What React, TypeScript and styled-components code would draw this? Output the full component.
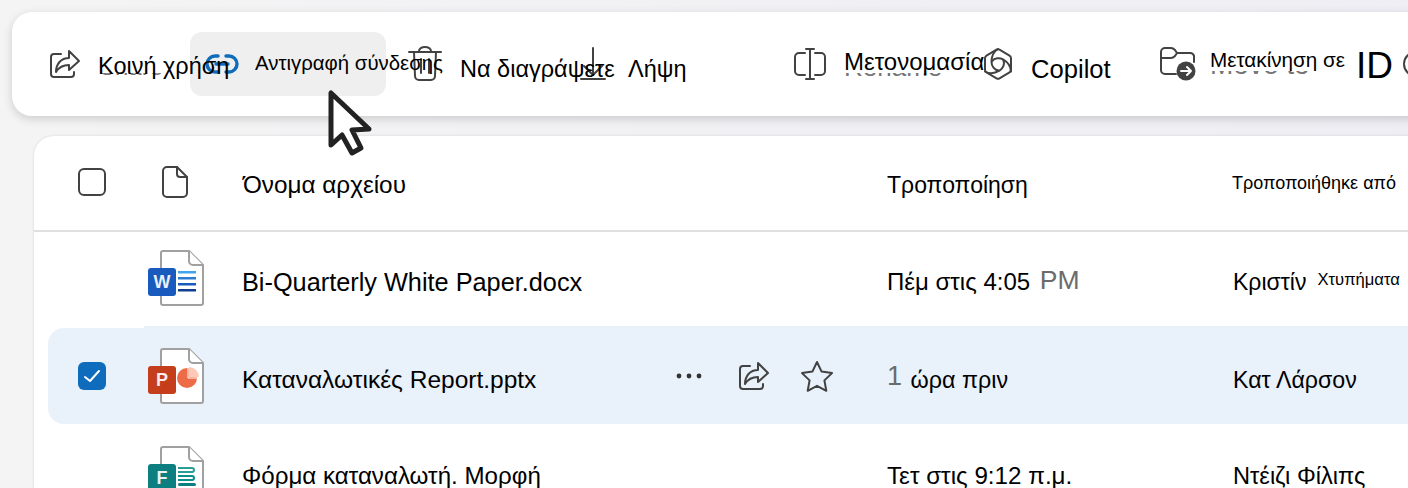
import React from "react";
import styled, { createGlobalStyle } from "styled-components";

const GlobalStyle = createGlobalStyle`
  html, body {
    margin: 0;
    height: 100%;
    overflow: hidden;
    background: linear-gradient(90deg, #f4f4f4, #eeeef4);
  }
  body {
    font-family: "Liberation Sans", Arial, sans-serif;
    color: #000;
  }
`;

const Page = styled.div`
  position: relative;
  width: 1408px;
  height: 488px;
  overflow: hidden;
  padding: 12px 0 0 12px;
  box-sizing: border-box;
`;

const Toolbar = styled.div`
  display: flex;
  align-items: center;
  width: 1500px;
  height: 104px;
  box-sizing: border-box;
  padding-left: 37px;
  background: #fff;
  border-radius: 20px;
  box-shadow: 0 3px 10px rgba(0, 0, 0, 0.16);
`;

const Action = styled.div<{ $width: number; $lead?: number }>`
  position: relative;
  display: flex;
  flex: none;
  align-items: center;
  width: ${(p) => p.$width}px;
  height: 64px;
  margin-left: ${(p) => p.$lead ?? 0}px;
  white-space: nowrap;

  svg {
    flex: none;
  }
`;

const HoverAction = styled(Action)`
  background: #efefef;
  border-radius: 12px;
  padding-left: 15px;
  box-sizing: border-box;
`;

const ActionLabel = styled.span<{ $size: number; $gap: number; $lift: number }>`
  position: relative;
  z-index: 1;
  font-size: ${(p) => p.$size}px;
  line-height: 30px;
  margin-left: ${(p) => p.$gap}px;
  margin-bottom: ${(p) => p.$lift}px;
`;

const AccountRing = styled.div`
  flex: none;
  width: 22px;
  height: 22px;
  margin-left: 10px;
  border: 2px solid #424242;
  border-radius: 50%;
`;

// remains of the untranslated caption, only its lower edge still shows
const Ghost = styled.span<{ $left: number; $top: number; $size: number }>`
  position: absolute;
  left: ${(p) => p.$left}px;
  top: ${(p) => p.$top}px;
  height: 3px;
  overflow: hidden;
  font-size: ${(p) => p.$size}px;
  color: #757575;

  span {
    display: block;
    margin-top: -18px;
    line-height: 24px;
  }
`;

const Panel = styled.div`
  width: 1500px;
  height: 420px;
  margin: 20px 0 0 22px;
  background: #fff;
  border-radius: 20px 0 0 0;
  box-shadow: 0 0 3px rgba(0, 0, 0, 0.12);
`;

const HeaderRow = styled.div`
  display: grid;
  grid-template-columns: 128px 81px 644px 345px 1fr;
  align-items: center;
  height: 96px;
  border-bottom: 2px solid #e0e0e0;
  box-sizing: border-box;
`;

const HeaderCell = styled.div<{ $size: number; $drop: number }>`
  font-size: ${(p) => p.$size}px;
  line-height: 30px;
  white-space: nowrap;
  margin-top: ${(p) => p.$drop}px;
`;

const CheckCell = styled.div`
  display: flex;
  align-items: center;
  justify-content: center;
  padding-right: 12px;
`;

const HeadCheckCell = styled(CheckCell)`
  margin-bottom: 2px;
`;

const CheckBox = styled.div<{ $checked?: boolean }>`
  display: flex;
  align-items: center;
  justify-content: center;
  width: 28px;
  height: 28px;
  box-sizing: border-box;
  border-radius: 6px;
  border: ${(p) => (p.$checked ? "none" : "2px solid #424242")};
  background: ${(p) => (p.$checked ? "#0f6cbd" : "#fff")};
`;

const DocCell = styled.div`
  display: flex;
  align-items: center;
`;

const HeadDocCell = styled(DocCell)`
  margin-bottom: 2px;
`;

const NameCell = styled.div<{ $size: number }>`
  position: relative;
  font-size: ${(p) => p.$size}px;
  line-height: 30px;
  white-space: nowrap;
  display: flex;
  align-items: center;
`;

const TextCell = styled.div<{ $size: number }>`
  font-size: ${(p) => p.$size}px;
  line-height: 30px;
  white-space: nowrap;
`;

const FileRow = styled.div<{ $selected?: boolean; $textDrop: number; $iconShift: number }>`
  position: relative;
  display: grid;
  grid-template-columns: 100px 94px 645px 346px 1fr;
  align-items: center;
  height: 96px;
  margin-left: 14px;
  border-radius: 16px 0 0 16px;
  background: ${(p) => (p.$selected ? "#e9f1fb" : "transparent")};

  ${NameCell}, ${TextCell} {
    margin-top: ${(p) => p.$textDrop}px;
  }

  ${DocCell} {
    margin-top: ${(p) => Math.max(p.$iconShift, 0)}px;
    margin-bottom: ${(p) => Math.max(-p.$iconShift, 0)}px;
  }

  ${(p) =>
    p.$selected &&
    `&::before {
      content: "";
      position: absolute;
      left: 96px;
      right: 0;
      top: -2px;
      height: 2px;
      background: #e9f1fb;
    }`}
`;

const RowActions = styled.div`
  position: absolute;
  left: 434px;
  top: -5px;
  display: flex;
  align-items: center;
  gap: 30px;

  svg:first-child {
    margin-right: 6px;
  }
`;

const Muted = styled.span<{ $size: number; $before: number; $after: number; $raise: number }>`
  color: #6b6b6b;
  font-size: ${(p) => p.$size}px;
  line-height: 0;
  vertical-align: ${(p) => p.$raise}px;
  margin: 0 ${(p) => p.$after}px 0 ${(p) => p.$before}px;
`;

const Small = styled.span`
  font-size: 16.6px;
  line-height: 0;
  margin-left: 11px;
  vertical-align: 5px;
`;

const CursorMark = styled.svg`
  position: absolute;
  left: 324px;
  top: 86px;
`;

const stroke = { fill: "none", stroke: "#424242", strokeWidth: 2, strokeLinecap: "round" as const, strokeLinejoin: "round" as const };

const ShareIcon = () => (
  <svg width="32" height="30" viewBox="0 0 32 30" {...stroke}>
    <path d="M12 5H5a3 3 0 0 0-3 3v17a3 3 0 0 0 3 3h17a3 3 0 0 0 3-3v-2" />
    <path d="M20 2l10 10-10 9v-5c-6 0-10 2-13 7 0-8 5-14 13-14z" />
  </svg>
);

const LinkIcon = () => (
  <svg width="34" height="20" viewBox="0 0 34 20" fill="none" stroke="#0f6cbd" strokeWidth="3.4" strokeLinecap="round">
    <path d="M13 2h-3a8 8 0 0 0 0 16h3" />
    <path d="M21 2h3a8 8 0 0 1 0 16h-3" />
    <path d="M11 10h12" />
  </svg>
);

const TrashIcon = () => (
  <svg width="34" height="36" viewBox="0 0 34 36" {...stroke}>
    <path d="M1 6h32" />
    <path d="M11 6V5a6 4 0 0 1 12 0v1" />
    <path d="M6 6l1 24a4 4 0 0 0 4 4h12a4 4 0 0 0 4-4l1-24" />
    <path d="M13 13v14M21 13v14" />
  </svg>
);

const DownloadIcon = () => (
  <svg width="26" height="34" viewBox="0 0 26 34" {...stroke}>
    <path d="M13 1v27" />
    <path d="M4 19l9 9 9-9" />
    <path d="M1 32h24" />
  </svg>
);

const RenameIcon = () => (
  <svg width="32" height="32" viewBox="0 0 32 32" {...stroke}>
    <path d="M11 5H5a4 4 0 0 0-4 4v14a4 4 0 0 0 4 4h6" />
    <path d="M21 5h6a4 4 0 0 1 4 4v14a4 4 0 0 1-4 4h-6" />
    <path d="M12 1h8M16 1v30M12 31h8" />
  </svg>
);

const CopilotIcon = () => (
  <svg width="28" height="32" viewBox="0 0 28 32" {...stroke}>
    <path d="M12.500 1.600a3 3 0 0 1 3 0l10 6a3 3 0 0 1 1.500 2.600v11.600a3 3 0 0 1-1.500 2.600l-10 6a3 3 0 0 1-3 0l-10-6a3 3 0 0 1-1.500-2.600V10.200a3 3 0 0 1 1.500-2.600z" />
    {[0, 120, 240].map((angle) => (
      <path key={angle} d="M14 1C9 4 7.500 9 7.500 14c0 4 3 8 7 8.500" transform={`rotate(${angle} 14 16)`} />
    ))}
  </svg>
);

const MoveIcon = () => (
  <svg width="36" height="34" viewBox="0 0 36 34" fill="none">
    <g {...stroke}>
      <path d="M16 27H5a4 4 0 0 1-4-4V5a4 4 0 0 1 4-4h6c2 0 3 1 4 2l2 3h13a4 4 0 0 1 4 3v6" />
      <path d="M1 11h10c2 0 3-1 4-2l2-3" />
    </g>
    <circle cx="26" cy="24" r="9.500" fill="#424242" />
    <path d="M21 24h10M27 20l4 4-4 4" stroke="#fff" strokeWidth="2" strokeLinecap="round" strokeLinejoin="round" />
  </svg>
);

const DotsIcon = () => (
  <svg width="26" height="6" viewBox="0 0 26 6" fill="#333">
    <circle cx="3" cy="3" r="2.400" />
    <circle cx="13" cy="3" r="2.400" />
    <circle cx="23" cy="3" r="2.400" />
  </svg>
);

const StarIcon = () => (
  <svg width="34" height="32" viewBox="0 0 34 32" {...stroke}>
    <path d="M17 2l4.600 9.600 10.400 1.500-7.600 7.300 1.900 10.400-9.300-5-9.300 5 1.900-10.400L2 13.100l10.400-1.500z" />
  </svg>
);

const FileHeadIcon = () => (
  <svg width="26" height="32" viewBox="0 0 26 32" {...stroke}>
    <path d="M15 1H5a4 4 0 0 0-4 4v22a4 4 0 0 0 4 4h16a4 4 0 0 0 4-4V11z" />
    <path d="M15 1v7a3 3 0 0 0 3 3h7" />
  </svg>
);

const DocIcon: React.FC<{ badge: string; letter: string; children: React.ReactNode }> = ({ badge, letter, children }) => (
  <svg width="58" height="58" viewBox="0 0 58 58">
    <path d="M15 2a2 2 0 0 0-2 2v50a2 2 0 0 0 2 2h38a2 2 0 0 0 2-2V16L41 2z" fill="#fff" stroke="#a0a0a0" strokeWidth="2" />
    <path d="M41 2v10a4 4 0 0 0 4 4h10" fill="#fff" stroke="#a0a0a0" strokeWidth="2" />
    {children}
    <rect x="0" y="19" width="28" height="28" rx="3" fill={badge} />
    <text x="14" y="39" textAnchor="middle" fontSize="18" fontWeight="700" fill="#fff" fillOpacity="0.92" fontFamily="Liberation Sans, Arial, sans-serif">
      {letter}
    </text>
  </svg>
);

const WordDoc = () => (
  <DocIcon badge="#185abd" letter="W">
    <rect x="30" y="22" width="18" height="2.500" fill="#41a5ee" />
    <rect x="30" y="28" width="18" height="2.500" fill="#2b7cd3" />
    <rect x="30" y="34" width="18" height="2.500" fill="#185abd" />
    <rect x="30" y="40" width="18" height="2.500" fill="#103f91" />
  </DocIcon>
);

const SlidesDoc = () => (
  <DocIcon badge="#c43e1c" letter="P">
    <circle cx="39" cy="31" r="10" fill="#ed6c47" />
    <path d="M41 20a10 10 0 0 1 10 10H41z" fill="#ffc9b8" />
    <path d="M40 20v11h11" fill="none" stroke="#fff" strokeWidth="1" />
  </DocIcon>
);

const FormDoc = () => (
  <DocIcon badge="#0d7f80" letter="F">
    <path d="M30 23h14a2 2 0 0 1 0 4H30" fill="none" stroke="#2a9d97" strokeWidth="2" />
    <path d="M30 31h14a2 2 0 0 1 0 4H30" fill="none" stroke="#0d8f8a" strokeWidth="2" />
    <rect x="30" y="38" width="18" height="3" rx="1.500" fill="#0d7f80" />
  </DocIcon>
);

const Check = () => (
  <svg width="18" height="14" viewBox="0 0 18 14" fill="none" stroke="#fff" strokeWidth="2" strokeLinecap="round" strokeLinejoin="round">
    <path d="M2 8l5 4 9-10" />
  </svg>
);

const Pointer = () => (
  <CursorMark width="52" height="72" viewBox="0 0 52 72">
    <path d="M7 7V59L18 49 28 67 37 62 28 44 45 43Z" fill="#fff" stroke="#222" strokeWidth="5" strokeLinejoin="round" />
  </CursorMark>
);

export default function App() {
  return (
    <>
      <GlobalStyle />
      <Page>
        <Toolbar>
          <Action $width={141}>
            <ShareIcon />
            <ActionLabel $size={23.5} $gap={17} $lift={-4}>Κοινή χρήση</ActionLabel>
            <Ghost $left={50} $top={41} $size={24}><span>Share</span></Ghost>
          </Action>
          <HoverAction $width={196}>
            <LinkIcon />
            <ActionLabel $size={20.4} $gap={16} $lift={2}>Αντιγραφή σύνδεσης</ActionLabel>
          </HoverAction>
          <Action $width={172} $lead={22}>
            <TrashIcon />
            <ActionLabel $size={23.5} $gap={18} $lift={-9}>Να διαγράψετε</ActionLabel>
          </Action>
          <Action $width={214}>
            <DownloadIcon />
            <ActionLabel $size={23.5} $gap={22} $lift={-9}>Λήψη</ActionLabel>
          </Action>
          <Action $width={190}>
            <RenameIcon />
            <ActionLabel $size={24} $gap={18} $lift={4}>Μετονομασία</ActionLabel>
            <Ghost $left={50} $top={41} $size={26}><span>Rename</span></Ghost>
          </Action>
          <Action $width={176}>
            <CopilotIcon />
            <ActionLabel $size={25.6} $gap={19} $lift={-9}>Copilot</ActionLabel>
          </Action>
          <Action $width={196}>
            <MoveIcon />
            <ActionLabel $size={20.7} $gap={14} $lift={8}>Μετακίνηση σε</ActionLabel>
            <Ghost $left={50} $top={39} $size={28}><span>Move to</span></Ghost>
          </Action>
          <Action $width={80}>
            <ActionLabel $size={37} $gap={0} $lift={-3}>ID</ActionLabel>
            <AccountRing />
          </Action>
        </Toolbar>
        <Panel>
          <HeaderRow>
            <HeadCheckCell><CheckBox /></HeadCheckCell>
            <HeadDocCell><FileHeadIcon /></HeadDocCell>
            <HeaderCell $size={24.3} $drop={4}>Όνομα αρχείου</HeaderCell>
            <HeaderCell $size={23} $drop={4}>Τροποποίηση</HeaderCell>
            <HeaderCell $size={18} $drop={0}>Τροποποιήθηκε από</HeaderCell>
          </HeaderRow>
          <FileRow $textDrop={4} $iconShift={-4}>
            <div />
            <DocCell><WordDoc /></DocCell>
            <NameCell $size={25.3}>Bi-Quarterly White Paper.docx</NameCell>
            <TextCell $size={24}>Πέμ στις 4:05 <Muted $size={26.5} $before={3} $after={0} $raise={1}>PM</Muted></TextCell>
            <TextCell $size={23}>Κριστίν<Small>Χτυπήματα</Small></TextCell>
          </FileRow>
          <FileRow $selected $textDrop={8} $iconShift={0}>
            <CheckCell><CheckBox $checked><Check /></CheckBox></CheckCell>
            <DocCell><SlidesDoc /></DocCell>
            <NameCell $size={24.5}>
              Καταναλωτικές Report.pptx
              <RowActions>
                <DotsIcon />
                <ShareIcon />
                <StarIcon />
              </RowActions>
            </NameCell>
            <TextCell $size={23.3}><Muted $size={27} $before={0} $after={2} $raise={3}>1</Muted> ώρα πριν</TextCell>
            <TextCell $size={23.2}>Κατ Λάρσον</TextCell>
          </FileRow>
          <FileRow $textDrop={8} $iconShift={4}>
            <div />
            <DocCell><FormDoc /></DocCell>
            <NameCell $size={24.15}>Φόρμα καταναλωτή. Μορφή</NameCell>
            <TextCell $size={24.2}>Τετ στις 9:12 π.μ.</TextCell>
            <TextCell $size={23.6}>Ντέιζι Φίλιπς</TextCell>
          </FileRow>
        </Panel>
        <Pointer />
      </Page>
    </>
  );
}
